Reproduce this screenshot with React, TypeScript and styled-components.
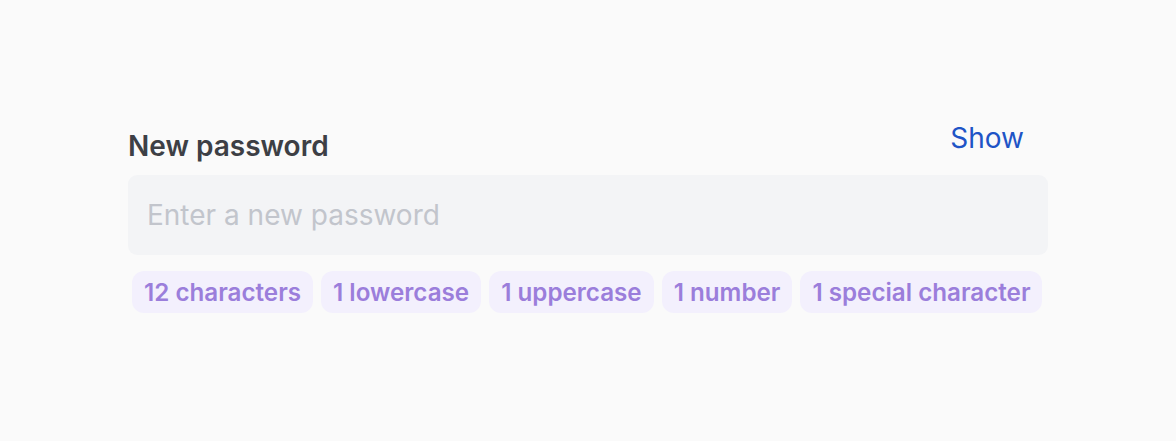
import React from 'react';
import styled, { createGlobalStyle } from 'styled-components';

const GlobalStyle = createGlobalStyle`
  html, body {
    margin: 0;
    padding: 0;
    background: #fafafa;
    font-family: Inter, "Noto Sans", sans-serif;
  }
`;

const Page = styled.div`
  width: 1176px;
  height: 441px;
  display: flex;
  justify-content: center;
  padding-top: 121px;
  box-sizing: border-box;
`;

const Field = styled.div`
  width: 920px;
  display: flex;
  flex-direction: column;
`;

const LabelRow = styled.div`
  display: flex;
  justify-content: space-between;
  align-items: flex-start;
  padding-bottom: 12px;
`;

const Label = styled.label`
  font-size: 28px;
  font-weight: 600;
  color: #3d3f45;
  line-height: 34px;
  padding-top: 8px;
`;

const ShowButton = styled.button`
  background: none;
  border: none;
  font-family: inherit;
  font-size: 28px;
  font-weight: 400;
  color: #1e54c6;
  line-height: 34px;
  padding: 0 24px 0 0;
  cursor: pointer;
`;

const Input = styled.input`
  height: 80px;
  border: none;
  border-radius: 9px;
  background: #f3f4f6;
  padding: 0 19px;
  font-family: inherit;
  font-size: 28px;
  color: #3d3f45;
  outline: none;
  &::placeholder {
    color: #c2c5cc;
  }
`;

const Rules = styled.div`
  display: flex;
  gap: 8px;
  padding: 16px 4px 0;
`;

const Rule = styled.span`
  display: inline-flex;
  align-items: center;
  flex-shrink: 0;
  white-space: nowrap;
  height: 42px;
  padding: 0 12px;
  border-radius: 12px;
  background: #f3f0fd;
  color: #9b7edb;
  font-size: 24.2px;
  font-weight: 600;
`;

const rules = ['12 characters', '1 lowercase', '1 uppercase', '1 number', '1 special character'];

export default function App() {
  return (
    <>
      <GlobalStyle />
      <Page>
        <Field>
          <LabelRow>
            <Label htmlFor="new-password">New password</Label>
            <ShowButton type="button">Show</ShowButton>
          </LabelRow>
          <Input id="new-password" type="password" placeholder="Enter a new password" />
          <Rules>
            {rules.map((r) => (
              <Rule key={r}>{r}</Rule>
            ))}
          </Rules>
        </Field>
      </Page>
    </>
  );
}
